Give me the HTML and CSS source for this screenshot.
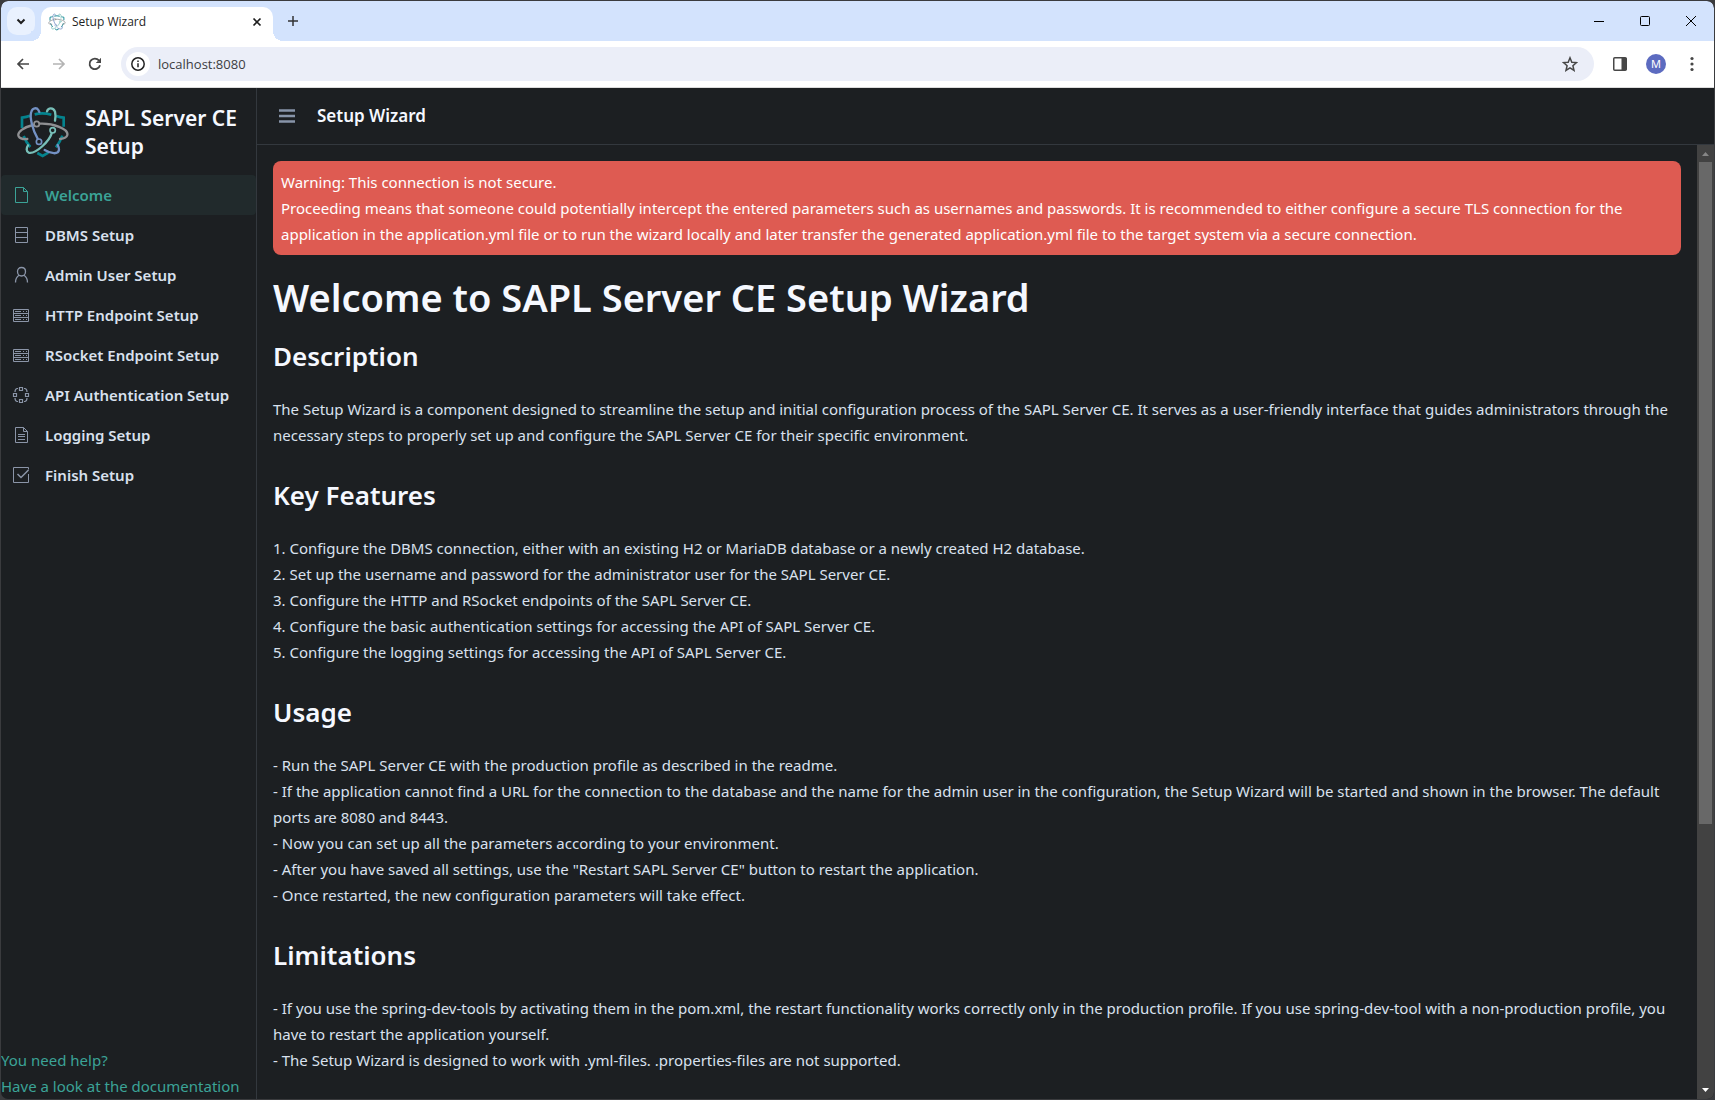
FILE: index.html
```html
<!DOCTYPE html>
<html lang="en">
<head>
<meta charset="utf-8">
<title>Setup Wizard</title>
<link rel="stylesheet" href="styles.css">
</head>
<body>
<svg class="defs" aria-hidden="true">
  <symbol id="logo" viewBox="48 314 162 162">
    <g fill="none" stroke-width="7" stroke-linecap="round">
      <g stroke="#04838e" stroke-width="8" stroke-linecap="butt">
        <path d="M66 383V352Q80 350 90 346M104 342Q128 336 154 343M169 347Q180 351 191 352V379M71 407Q78 426 91 440M187 406Q180 426 168 441M112 458L128 467L145 457"/>
      </g>
      <path stroke="#8f9093" d="M119 370C160 368 206 386 202 404C200 413 190 415 180 416M99 374C72 380 50 396 56 408C60 415 70 417 82 416"/>
      <circle stroke="#8f9093" stroke-width="5" cx="110" cy="371" r="8"/>
      <path stroke="#7391c4" d="M113 415C98 390 88 350 94 334C98 322 110 321 115 329L118 335M134 449C152 460 175 464 177 448Q177 441 173 434"/>
      <circle stroke="#7391c4" stroke-width="5" cx="117" cy="424" r="8"/>
      <path stroke="#78bfb8" d="M155 399C148 422 108 462 86 457C78 454 79 442 84 435M141 333C145 321 160 321 165 334Q168 345 165 361"/>
      <circle stroke="#78bfb8" stroke-width="5" cx="158" cy="390" r="8"/>
    </g>
  </symbol>
  <symbol id="server" viewBox="0 0 18 18">
    <path fill="none" stroke="currentColor" d="M1.500 3.500h15v12h-15zM1.500 7.500h15M1.500 11.500h15M3 5.500h6M3 9.500h6M3 13.500h6M11 5.500h1M14 5.500h1M11 9.500h1M14 9.500h1M11 13.500h1M14 13.500h1"/>
  </symbol>
</svg>

<div class="window">
  <header class="tabstrip">
    <button class="tab-search" aria-label="Search tabs"><svg width="12" height="12" viewBox="0 0 12 12"><path d="M2.500 4.500L6 8l3.500-3.500" fill="none" stroke="#1f1f1f" stroke-width="2"/></svg></button>
    <div class="tab">
      <svg width="18" height="18"><use href="#logo"/></svg>
      <span class="tab-title">Setup Wizard</span>
      <button class="plain" aria-label="Close tab"><svg width="10" height="10" viewBox="0 0 10 10"><path d="M1.500 1.500l7 7M8.500 1.500l-7 7" stroke="#1f1f1f" stroke-width="1.700"/></svg></button>
    </div>
    <button class="plain new-tab" aria-label="New tab"><svg width="12" height="12" viewBox="0 0 12 12"><path d="M6 1v10M1 6h10" stroke="#333" stroke-width="1.500"/></svg></button>
    <div class="window-controls">
      <button class="plain" aria-label="Minimize"><svg width="12" height="12" viewBox="0 0 12 12"><path d="M1 6.500h10" stroke="#000"/></svg></button>
      <button class="plain" aria-label="Maximize"><svg width="12" height="12" viewBox="0 0 12 12"><rect x="1.500" y="1.500" width="9" height="9" rx="1" fill="none" stroke="#000"/></svg></button>
      <button class="plain" aria-label="Close"><svg width="12" height="12" viewBox="0 0 12 12"><path d="M1 1l10 10M11 1L1 11" stroke="#000"/></svg></button>
    </div>
  </header>

  <div class="toolbar">
    <button class="plain" aria-label="Back"><svg width="14" height="14" viewBox="0 0 14 14"><path d="M13 7H2M7 2L2 7l5 5" fill="none" stroke="#474747" stroke-width="1.700"/></svg></button>
    <button class="plain" aria-label="Forward"><svg width="14" height="14" viewBox="0 0 14 14"><path d="M1 7h11M7 2l5 5-5 5" fill="none" stroke="#b4b4b4" stroke-width="1.700"/></svg></button>
    <button class="plain" aria-label="Reload"><svg width="14" height="14" viewBox="0 0 14 14"><path d="M12 8.200A5.300 5.300 0 1 1 10.900 3.400L12 4.600" fill="none" stroke="#474747" stroke-width="1.800"/><path d="M13 .8v5.200H7.800L9.500 4.300h1.800V2.500z" fill="#474747"/></svg></button>
    <div class="address">
      <button class="site-info" aria-label="View site information"><svg width="16" height="16" viewBox="0 0 16 16"><circle cx="8" cy="8" r="6.200" fill="none" stroke="#222" stroke-width="1.500"/><path d="M8 7.200v4M8 4.400v1.600" stroke="#222" stroke-width="1.500"/></svg></button>
      <input class="url" type="text" aria-label="Address" value="localhost:8080">
      <button class="plain" aria-label="Bookmark this page"><svg width="16" height="16" viewBox="0 0 16 16"><path d="M8 1.800l1.800 4.400 4.700.4-3.600 3.100 1.100 4.600L8 11.800l-4 2.500 1.100-4.600L1.500 6.600l4.700-.4z" fill="none" stroke="#474747" stroke-width="1.500"/></svg></button>
    </div>
    <div class="toolbar-end">
      <button class="plain" aria-label="Side panel"><svg width="14" height="14" viewBox="0 0 14 14"><rect x=".75" y=".75" width="12.500" height="12.500" rx="1" fill="none" stroke="#474747" stroke-width="1.500"/><path d="M8.500 1h5v12h-5z" fill="#474747"/></svg></button>
      <button class="avatar" aria-label="Profile">M</button>
      <button class="plain" aria-label="Menu"><svg width="14" height="16" viewBox="0 0 14 16"><g fill="#474747"><circle cx="7" cy="2.500" r="1.600"/><circle cx="7" cy="8" r="1.600"/><circle cx="7" cy="13.500" r="1.600"/></g></svg></button>
    </div>
  </div>

  <div class="app">
    <aside class="sidebar">
      <div class="brand">
        <svg width="54" height="54"><use href="#logo"/></svg>
        <span class="brand-name">SAPL Server CE Setup</span>
      </div>
      <nav class="nav">
        <a class="nav-item active" href="#welcome"><svg width="18" height="18" viewBox="0 0 18 18"><path fill="none" stroke="currentColor" d="M3.500 1.500h8l4 4v11h-12zM11.500 1.500v4h4"/></svg>Welcome</a>
        <a class="nav-item" href="#dbms"><svg width="18" height="18" viewBox="0 0 18 18"><path fill="none" stroke="currentColor" d="M3.500 1.500h12v15h-12zM3.500 6.500h12M3.500 11.500h12"/></svg>DBMS Setup</a>
        <a class="nav-item" href="#admin"><svg width="18" height="18" viewBox="0 0 18 18"><path fill="none" stroke="currentColor" stroke-width="1.300" d="M9.500 1.500c2.500 0 4 1.700 4 4s-1.500 4.500-4 4.500-4-2.200-4-4.500 1.500-4 4-4zM3.500 16.500c0-3.500 1-5.500 3.500-7.200M15.500 16.500c0-3.500-1-5.500-3.500-7.200"/></svg>Admin User Setup</a>
        <a class="nav-item" href="#http"><svg width="18" height="18"><use href="#server"/></svg>HTTP Endpoint Setup</a>
        <a class="nav-item" href="#rsocket"><svg width="18" height="18"><use href="#server"/></svg>RSocket Endpoint Setup</a>
        <a class="nav-item" href="#api"><svg width="18" height="18" viewBox="0 0 18 18"><path fill="none" stroke="currentColor" stroke-width="1.200" d="M7.500 1.500h3v3h-3zM7.500 13.500h3v3h-3zM1.500 7.500h3v3h-3zM13.500 7.500h3v3h-3zM6 2.500H5Q3 3 3 6M12 2.500h1Q15 3 15 6M3 12Q3 15 5 15.500h1M15 12Q15 15 13 15.500h-1"/></svg>API Authentication Setup</a>
        <a class="nav-item" href="#logging"><svg width="18" height="18" viewBox="0 0 18 18"><path fill="none" stroke="currentColor" d="M3.500 1.500h8l4 4v11h-12zM11.500 1.500v4h4M6 8.500h7M6 10.500h7M6 13.500h7"/></svg>Logging Setup</a>
        <a class="nav-item" href="#finish"><svg width="18" height="18" viewBox="0 0 18 18"><path fill="none" stroke="currentColor" d="M16.500 8v8.500h-15v-15h15v2"/><path fill="none" stroke="currentColor" stroke-width="1.500" d="M5.500 8l3.500 3.500L16.500 4"/></svg>Finish Setup</a>
      </nav>
      <footer class="help">
        <a href="#help">You need help?</a>
        <a href="#docs">Have a look at the documentation</a>
      </footer>
    </aside>

    <div class="main">
      <div class="navbar">
        <button class="plain" aria-label="Toggle menu"><svg width="16" height="14" viewBox="0 0 16 14"><path d="M0 1.500h16M0 7h16M0 12.500h16" stroke="#8794a9" stroke-width="2.600"/></svg></button>
        <span class="view-title">Setup Wizard</span>
      </div>
      <div class="scroll-area">
        <main class="content">
          <div class="alert" role="alert">Warning: This connection is not secure.<br>Proceeding means that someone could potentially intercept the entered parameters such as usernames and passwords. It is recommended to either configure a secure TLS connection for the application in the application.yml file or to run the wizard locally and later transfer the generated application.yml file to the target system via a secure connection.</div>
          <h1>Welcome to SAPL Server CE Setup Wizard</h1>
          <section>
            <h2>Description</h2>
            <p>The Setup Wizard is a component designed to streamline the setup and initial configuration process of the SAPL Server CE. It serves as a user-friendly interface that guides administrators through the necessary steps to properly set up and configure the SAPL Server CE for their specific environment.</p>
          </section>
          <section>
            <h2>Key Features</h2>
            <p>1. Configure the DBMS connection, either with an existing H2 or MariaDB database or a newly created H2 database.<br>
            2. Set up the username and password for the administrator user for the SAPL Server CE.<br>
            3. Configure the HTTP and RSocket endpoints of the SAPL Server CE.<br>
            4. Configure the basic authentication settings for accessing the API of SAPL Server CE.<br>
            5. Configure the logging settings for accessing the API of SAPL Server CE.</p>
          </section>
          <section>
            <h2>Usage</h2>
            <p>- Run the SAPL Server CE with the production profile as described in the readme.<br>
            - If the application cannot find a URL for the connection to the database and the name for the admin user in the configuration, the Setup Wizard will be started and shown in the browser. The default ports are 8080 and 8443.<br>
            - Now you can set up all the parameters according to your environment.<br>
            - After you have saved all settings, use the "Restart SAPL Server CE" button to restart the application.<br>
            - Once restarted, the new configuration parameters will take effect.</p>
          </section>
          <section>
            <h2>Limitations</h2>
            <p>- If you use the spring-dev-tools by activating them in the pom.xml, the restart functionality works correctly only in the production profile. If you use spring-dev-tool with a non-production profile, you have to restart the application yourself.<br>
            - The Setup Wizard is designed to work with .yml-files. .properties-files are not supported.</p>
          </section>
        </main>
        <div class="scrollbar" aria-hidden="true">
          <svg class="arrow" width="17" height="17" viewBox="0 0 17 17"><path d="M5 11h7L8.500 7z" fill="#868686"/></svg>
          <div class="track"><div class="thumb"></div></div>
          <svg class="arrow" width="17" height="17" viewBox="0 0 17 17"><path d="M5 6h7l-3.500 4z" fill="#fff"/></svg>
        </div>
      </div>
    </div>
  </div>
</div>
</body>
</html>
```
FILE: styles.css
```css
* { box-sizing: border-box; }

body {
  margin: 0;
  background: #3a3b3e;
  color: #d9e1ee;
  font: 15px/26px "Noto Sans", "Open Sans", sans-serif;
}

svg { display: block; flex: none; }
.defs { position: absolute; width: 0; height: 0; }
button { padding: 0; border: 0; font: inherit; }
a { text-decoration: none; }

.plain {
  display: flex;
  align-items: center;
  justify-content: center;
  background: none;
}

.window {
  display: flex;
  flex-direction: column;
  height: 100vh;
  border: 1px solid #3a3b3e;
  border-radius: 8px;
  overflow: hidden;
}

/* Browser frame */
.tabstrip {
  display: flex;
  align-items: center;
  height: 40px;
  flex: none;
  padding-left: 6px;
  background: #d3e3fd;
  border-radius: 7px 7px 0 0;
}
.tab-search {
  display: flex;
  align-items: center;
  justify-content: center;
  width: 28px;
  height: 28px;
  border-radius: 10px;
  background: #e9f1fe;
}
.tab {
  position: relative;
  display: flex;
  align-items: center;
  gap: 6px;
  align-self: flex-end;
  width: 232px;
  height: 34px;
  margin-left: 6px;
  padding: 0 11px 5px 7px;
  border-radius: 10px 10px 0 0;
  background: #fff;
}
.tab::before,
.tab::after {
  content: "";
  position: absolute;
  bottom: 0;
  width: 10px;
  height: 10px;
}
.tab::before { right: 100%; background: radial-gradient(circle at 0 0, #d3e3fd 10px, #fff 10px); }
.tab::after { left: 100%; background: radial-gradient(circle at 100% 0, #d3e3fd 10px, #fff 10px); }
.tab-title { flex: 1; color: #1f1f1f; font: 12px/16px "Open Sans", sans-serif; }
.new-tab { width: 28px; height: 28px; margin-left: 6px; }
.window-controls { display: flex; margin-left: auto; }
.window-controls .plain { width: 46px; height: 40px; }

.toolbar {
  display: flex;
  align-items: center;
  height: 47px;
  flex: none;
  padding: 0 4px;
  background: #fff;
  border-bottom: 1px solid #dcdcdc;
}
.toolbar > .plain { width: 36px; height: 36px; }
.address {
  display: flex;
  align-items: center;
  flex: 1;
  height: 34px;
  margin-left: 8px;
  padding: 0 16px 0 5px;
  border-radius: 17px;
  background: #ebeef8;
}
.site-info {
  display: flex;
  align-items: center;
  justify-content: center;
  width: 24px;
  height: 24px;
  border-radius: 12px;
  background: #fff;
}
.url {
  flex: 1;
  margin-left: 8px;
  padding: 0;
  border: 0;
  outline: 0;
  background: none;
  color: #3c3d42;
  font: 13px/20px "Open Sans", "Noto Sans", sans-serif;
}
.toolbar-end { display: flex; align-items: center; gap: 19px; padding: 0 11px 0 19px; }
.avatar {
  width: 20px;
  height: 20px;
  border-radius: 10px;
  background: #5c6bc0;
  color: #fff;
  font-size: 11px;
  line-height: 20px;
}

/* Application */
.app { display: flex; flex: 1; min-height: 0; background: #1c1f22; }

.sidebar {
  display: flex;
  flex-direction: column;
  width: 256px;
  flex: none;
  border-right: 1px solid #33383e;
}
.brand {
  display: flex;
  align-items: center;
  gap: 15px;
  height: 87px;
  padding: 0 8px 0 15px;
}
.brand-name { color: #f5f8ff; font-size: 21px; line-height: 28px; font-weight: 600; }
.nav { display: flex; flex-direction: column; }
.nav-item {
  display: flex;
  align-items: center;
  gap: 15px;
  height: 40px;
  padding-left: 11px;
  border-radius: 4px;
  color: #d9e1ee;
  font-weight: 600;
}
.nav-item svg { color: #8b95a8; }
.nav-item.active { background: #212a2c; color: #3ba397; }
.nav-item.active svg { color: #3ba397; }
.help { display: flex; flex-direction: column; margin-top: auto; }
.help a { color: #3ba397; }

.main { display: flex; flex-direction: column; flex: 1; min-width: 0; }
.navbar {
  display: flex;
  align-items: center;
  gap: 22px;
  height: 57px;
  flex: none;
  padding-left: 22px;
  border-bottom: 1px solid #33383e;
}
.view-title { color: #f5f8ff; font-size: 17px; font-weight: 600; }

.scroll-area { display: flex; flex: 1; min-height: 0; }
.content { flex: 1; min-width: 0; padding: 16px; overflow: hidden; }
.alert { padding: 8px; border-radius: 8px; background: #de5b52; color: #fff; }
h1, h2 { color: #f5f8ff; font-weight: 600; }
h1 { margin: 17px 0 16px; font-size: 38px; line-height: 50px; }
h2 { margin: 0 0 22px; font-size: 26px; line-height: 36px; }
p { margin: 0 0 29px; }

.scrollbar { display: flex; flex-direction: column; width: 17px; flex: none; background: #424242; }
.track { flex: 1; padding: 0 2px; }
.thumb { height: 72%; background: #686868; }
```
